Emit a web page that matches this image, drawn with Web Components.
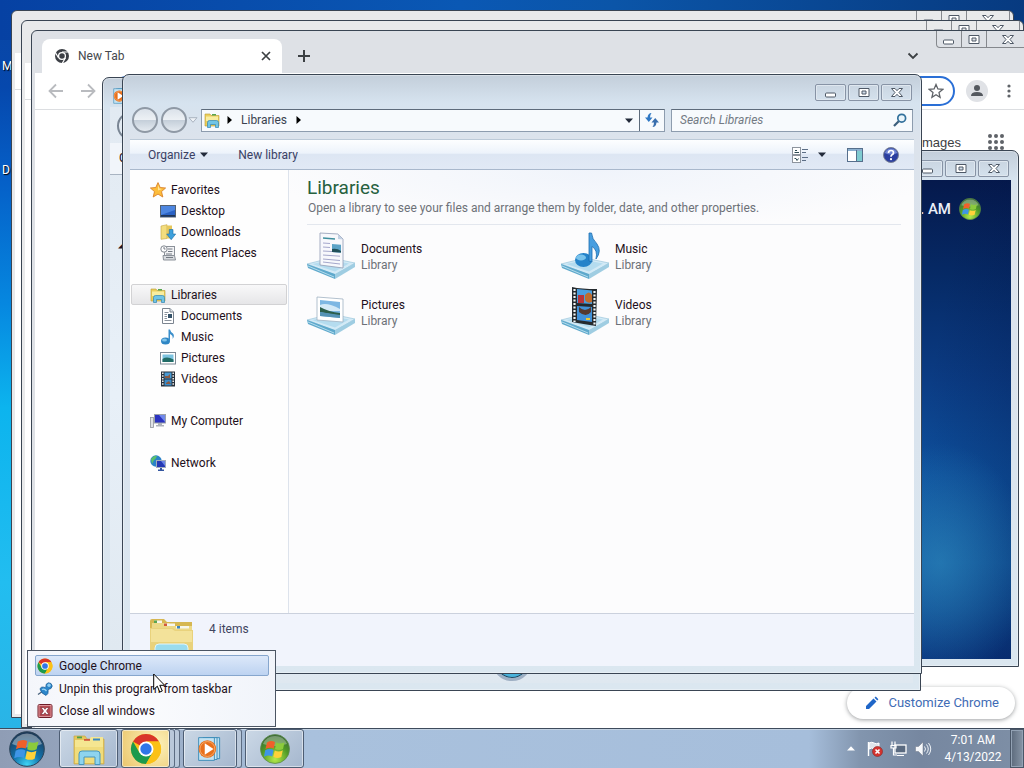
<!DOCTYPE html>
<html lang="en">
<head>
<meta charset="utf-8">
<title>Desktop</title>
<style>
    :root {
        --ui-font: Roboto, "Open Sans", sans-serif;
        --normal-text: 12px;
        --edge: #3a4553;
        --ink: #1e1020;
        --muted: #6d7178;
    }
    html, body { height: 100%; }
    body {
        margin: 0;
        overflow: hidden;
        font-family: var(--ui-font);
        font-size: var(--normal-text);
        line-height: 16px;
        color: var(--ink);
    }
</style>
</head>
<body>
<win-desktop></win-desktop>

<script>
const BASE = `
    <path d="M0 33 L24 27 L48 32 L28 44 Z" fill="#d3eaf6" stroke="#8fbfd6" stroke-width=".6"/>
    <path d="M0 33 L28 43 V48 L1 37 Z" fill="#5fa9cc"/>
    <path d="M28 43 L48 32 V36 L28 48 Z" fill="#9fcde2"/>
    <path d="M5 33 L24 29 L42 32.500 L28 40.500 Z" fill="#b5dcef"/>
    <path d="M1 35 L27 46" stroke="#c9e8f5" stroke-width=".8"/>`;

const FLAG = `
    <path d="M7 8.500 Q11 6 15 8 L13.800 14.500 Q10 12.800 5.500 15 Z" fill="#f0602a"/>
    <path d="M16.300 8.600 Q20 10.500 24.500 8.500 L23 15 Q19 17 15 15 Z" fill="#8ccb3c"/>
    <path d="M5.200 16.300 Q9.500 14 13.500 16 L12.200 22.500 Q8.500 20.500 4 22.700 Z" fill="#3f95e6"/>
    <path d="M14.700 16.600 Q19 18.500 22.800 16.300 L21.300 23 Q17.500 25 13.400 23 Z" fill="#ffd23a"/>`;

// name: [viewBox width, viewBox height, markup]
const ICONS = {
    minimize: [14, 11, `<rect x="1.500" y="6" width="10" height="4" rx="1" fill="#fff" stroke="#4e5866"/>`],
    maximize: [14, 11, `<path d="M2 1.500 h10 v8 h-10 z M5 4 h4 v3 h-4 z" fill="#fff" stroke="#4e5866" fill-rule="evenodd"/>`],
    close: [14, 11, `<path d="M1.500 1.500 H5 L7 3.700 L9 1.500 H12.500 L9 5.500 L12.500 9.500 H9 L7 7.300 L5 9.500 H1.500 L5 5.500 Z" fill="#fff" stroke="#4e5866"/>`],
    chromeMono: [16, 16, `<circle cx="8" cy="8" r="7" fill="#3d4046"/><circle cx="8" cy="8" r="3.400" fill="#3d4046" stroke="#fff" stroke-width="1.300"/>
        <path d="M8 4 H14.500 M4.500 9.800 L1.200 4.200 M11.500 9.800 L8.300 15.200" stroke="#fff" stroke-width="1.200"/>`],
    chrome: [32, 32, `<circle cx="16" cy="16" r="15" fill="#fbc116"/>
        <path d="M16 16 L3 8.500 A15 15 0 0 1 29 8.500 H16 Z" fill="#d9352a"/>
        <path d="M3 8.500 A15 15 0 0 0 16 31 L22.500 19.700 L9.500 19.700 Z" fill="#1c9a4d"/>
        <path d="M16 31 A15 15 0 0 0 29 8.500 H16 L22.500 19.700 Z" fill="#fbc116"/>
        <circle cx="16" cy="16" r="7.500" fill="#fff"/><circle cx="16" cy="16" r="5.700" fill="#2f76e8"/>`],
    tabClose: [12, 12, `<path d="M2 2 L10 10 M10 2 L2 10" stroke="#3c4043" stroke-width="1.700"/>`],
    plus: [14, 14, `<path d="M7 1 V13 M1 7 H13" stroke="#3c4043" stroke-width="2"/>`],
    chevron: [12, 12, `<path d="M1.500 3.500 L6 8 L10.500 3.500" fill="none" stroke="#3c4043" stroke-width="1.800"/>`],
    back: [16, 16, `<path d="M15 8 H2 M8 1.500 L1.500 8 L8 14.500" fill="none" stroke="#b9bbbf" stroke-width="1.800"/>`],
    forward: [16, 16, `<path d="M1 8 H14 M8 1.500 L14.500 8 L8 14.500" fill="none" stroke="#b9bbbf" stroke-width="1.800"/>`],
    star: [16, 16, `<path d="M8 1.500 L9.900 6 L14.700 6.400 L11 9.600 L12.100 14.300 L8 11.800 L3.900 14.300 L5 9.600 L1.300 6.400 L6.100 6 Z" fill="none" stroke="#5f6368" stroke-width="1.300"/>`],
    avatar: [22, 22, `<circle cx="11" cy="11" r="11" fill="#e0e2e6"/><circle cx="11" cy="8" r="3" fill="#54585e"/><path d="M5 16 q0 -4 6 -4 t6 4 z" fill="#54585e"/>`],
    dots: [16, 16, `<g fill="#5f6368"><circle cx="8" cy="3" r="1.600"/><circle cx="8" cy="8" r="1.600"/><circle cx="8" cy="13" r="1.600"/></g>`],
    apps: [16, 16, `<g fill="#5f6368"><circle cx="2" cy="2" r="2"/><circle cx="8" cy="2" r="2"/><circle cx="14" cy="2" r="2"/><circle cx="2" cy="8" r="2"/><circle cx="8" cy="8" r="2"/><circle cx="14" cy="8" r="2"/><circle cx="2" cy="14" r="2"/><circle cx="8" cy="14" r="2"/><circle cx="14" cy="14" r="2"/></g>`],
    pencil: [14, 14, `<path d="M1 13 V10 L8.500 2.500 L11.500 5.500 L4 13 Z M9.500 1.700 L10.800 .6 L13.400 3.200 L12.300 4.500 Z" fill="#1f66c8"/>`],
    down: [8, 5, `<path d="M0 .5 H8 L4 5 Z" fill="#222a3a"/>`],
    right: [5, 8, `<path d="M.5 0 V8 L5 4 Z" fill="#000"/>`],
    hollowDown: [10, 6, `<path d="M1 .7 H9 L5 5.300 Z" fill="#eef2f7" stroke="#aab4c0"/>`],
    up: [8, 5, `<path d="M0 4.500 H8 L4 .3 Z" fill="#fff"/>`],
    folderLib: [16, 16, `<path d="M1 2 h5 l1 1.500 h8 V14 H1 Z" fill="#eccf5c" stroke="#b89a34" stroke-width=".6"/><path d="M2 4.500 h12 V9 H2 Z" fill="#f8eda0"/>
        <rect x="8" y="2" width="4" height="1.500" fill="#58a64c"/><path d="M3.500 15.500 V10.500 Q3.500 8.500 5.500 8.500 H12.500 Q14.500 8.500 14.500 10.500 V15.500 H11.500 V12.500 H6.500 V15.500 Z" fill="#6fc4e6" stroke="#3285b2" stroke-width=".7"/>`],
    explorer: [32, 32, `<path d="M1 3 h11 l2 3 h17 v25 H1 Z" fill="#e5c65c" stroke="#c7a646" stroke-width=".7"/>
        <path d="M2 7 h14 l2 -3 h12 v26 H2 Z" fill="#f5e691"/><path d="M2 14 H30 V30 H2 Z" fill="#f0dc7c"/>
        <rect x="4" y="3.500" width="5" height="1.800" fill="#4e9f4a"/><rect x="11" y="6" width="6" height="1.800" fill="#d3573d"/><rect x="20" y="5.500" width="7" height="2" fill="#3b88c0"/>
        <path d="M6 31.500 V21 Q6 18 9 18 H24 Q27 18 27 21 V31.500 H22 V24 H11 V31.500 Z" fill="#8ed4ee" stroke="#4796bd"/>`],
    folders: [44, 44, `<path d="M1 3 Q1 1 3 1 H15 L18 4 H43 V44 H1 Z" fill="#d6b752"/><path d="M3 5 H20 L23 8 H43 V44 H2 Z" fill="#ecd987"/>
        <rect x="5" y="2.500" width="8" height="2.500" fill="#f6f6ec"/><rect x="5" y="2.500" width="3" height="2.500" fill="#5ba552"/>
        <rect x="15" y="5.500" width="11" height="2.500" fill="#f6f6ec"/><rect x="15" y="5.500" width="3" height="2.500" fill="#d2593d"/>
        <rect x="27" y="8" width="13" height="2.500" fill="#f6f6ec"/><rect x="28" y="8" width="3" height="2.500" fill="#3d83bd"/>
        <path d="M1 10 H24 L27 12 H44 V44 H1 Z" fill="#e9d27c"/><path d="M2 11 H23 L26 13 H43 V24 H2 Z" fill="#f3e29a"/>
        <path d="M6 44 V30 Q6 26 10 26 H35 Q39 26 39 30 V44 Z" fill="#9adcee" stroke="#dff5fb"/><path d="M11 33 H34" stroke="#5aaccb" stroke-width="2"/>`],
    favorites: [16, 16, `<path d="M8 .6 L10.200 5.500 L15.600 6 L11.500 9.600 L12.800 15 L8 12.100 L3.200 15 L4.500 9.600 L.4 6 L5.800 5.500 Z" fill="#fdbd3b" stroke="#d9812a" stroke-width=".9"/><path d="M8 3 L9.300 6.500 L12 7 L8 8.500 Z" fill="#ffe79b"/>`],
    desktop: [16, 16, `<rect x=".5" y="2.500" width="15" height="11.500" fill="#2a62c4" stroke="#54606e"/><path d="M1 3 H15 V7 L1 12 Z" fill="#4d86e0"/><rect x="1" y="12" width="14" height="1.700" fill="#1f3557"/>`],
    downloads: [16, 16, `<path d="M1 2 L7 .7 V14.500 L1 15.300 Z" fill="#f3dd7e" stroke="#c5a544" stroke-width=".6"/><path d="M7 1.500 h5 V14.500 H7 Z" fill="#e6c75b"/><path d="M9.300 5.500 H13 V10 H15.700 L11.200 15.700 L6.700 10 H9.300 Z" fill="#3da0dc" stroke="#1d6ea6" stroke-width=".6"/>`],
    recent: [16, 16, `<rect x="4.500" y="1.500" width="10" height="9" fill="#f3f4f6" stroke="#8b9199"/><path d="M3 10.500 H14.500 L15.500 15 H3.500 Z" fill="#d7dade" stroke="#8b9199"/><circle cx="4" cy="4" r="3.200" fill="#fff" stroke="#80878f"/><path d="M4 2 V4 H5.500 M8 4 H12.500 M8 6.500 H12.500 M6 9 H12 M6 12.500 H13" stroke="#747b84" fill="none"/>`],
    document: [16, 16, `<path d="M2.500 .5 H10 L13.500 4 V15.500 H2.500 Z" fill="#fff" stroke="#7c8590"/><path d="M10 .5 V4 H13.500" fill="#dfe5ea" stroke="#7c8590"/><path d="M4.500 4.500 H8.500 M4.500 6.500 H7 M4.500 8.500 H7 M4.500 10.500 H7 M4.500 12.500 H11.500" stroke="#8a929c"/><rect x="8" y="6" width="4" height="4" fill="#36536a"/>`],
    music: [16, 16, `<ellipse cx="5.500" cy="12" rx="4.500" ry="3.500" fill="#2e86c4"/><ellipse cx="4.500" cy="11" rx="2.500" ry="1.500" fill="#80c4ea"/><path d="M8.500 12 V.5 H10 Q10.500 3 13 4.500 Q15 7 12.500 10 Q13.500 6.500 10 5 V12 Z" fill="#3b8fcb"/>`],
    picture: [16, 16, `<rect x=".5" y="2.500" width="15" height="11.500" fill="#fff" stroke="#7c8995"/><rect x="2.500" y="4.500" width="11" height="7.500" fill="#7cc3e0"/><path d="M2.500 9 Q7 6 13.500 9.500 V12 H2.500 Z" fill="#216c66"/>`],
    video: [16, 16, `<rect x="1" y=".5" width="14" height="15" fill="#27303a"/><rect x="4.500" y="1.500" width="7" height="6" fill="#489ad4"/><rect x="4.500" y="8.500" width="7" height="6" fill="#3b8cc9"/><path d="M5 5 h3 l2 -2 v4 h-5z M6 12 l3 -2 l2 3 h-5z" fill="#8b5a43"/><path d="M2.800 1.500 V15 M13.200 1.500 V15" stroke="#fff" stroke-width="1.400" stroke-dasharray="1.500 1.200"/>`],
    computer: [16, 16, `<rect x=".5" y="4.500" width="3" height="10" fill="#dfe2e6" stroke="#8f959c" stroke-width=".8"/><rect x="4.500" y="1.500" width="11" height="8.500" fill="#2a32c0" stroke="#9ba1aa"/><path d="M9 2 H15 V9 Z" fill="#7189ea"/><path d="M8 10 h4 v2 h2 v1.500 H6 V12 h2 z" fill="#adb2b9"/>`],
    network: [16, 16, `<circle cx="6" cy="6" r="5.700" fill="#2a82c8"/><path d="M1 4 Q4 0 7 1 Q6 4 4 5 L2 9 Z M7 6 q3 0 3 3 l-3 2z" fill="#5bc06a"/><rect x="6.500" y="5.500" width="9" height="7" fill="#2438b4" stroke="#a2acbb"/><path d="M11 6 H15 V11 Z" fill="#6b86e6"/><path d="M10 13 h2 v1.500 h2 V16 H8 V14.500 h2z" fill="#3456a0"/>`],
    refresh: [16, 16, `<path d="M7.500 1 Q4 1 3.500 5.500 H1 L4.800 10 L8.500 5.500 H6 Q6 3 7.500 1 Z" fill="#2f78c4"/><path d="M8.500 15 Q12 15 12.500 10.500 H15 L11.200 6 L7.500 10.500 H10 Q10 13 8.500 15 Z" fill="#3a6fae"/>`],
    search: [14, 14, `<circle cx="8.700" cy="5.200" r="3.900" fill="#eaf5fb" stroke="#33719c" stroke-width="1.700"/><path d="M5.700 8.200 L1 13" stroke="#3a5d7b" stroke-width="2.200"/>`],
    views: [18, 16, `<rect x=".5" y=".5" width="8" height="7" fill="#fff" stroke="#8d949d"/><rect x=".5" y="8.500" width="8" height="7" fill="#fff" stroke="#8d949d"/><path d="M2.500 5.500 h4.500 M3 3.500 h2 M2.500 11.500 h1.500 l1 2 l1.500 -2" stroke="#2d4b53" fill="none"/><path d="M10 2.500 H16 M10 5.500 H14 M10 10.500 H16 M10 13.500 H14" stroke="#5c6e86"/>`],
    preview: [16, 14, `<rect x=".5" y=".5" width="15" height="13" fill="#fff" stroke="#566f8c"/><path d="M1 2 H15" stroke="#8bb0d0" stroke-width="2"/><rect x="10" y="3" width="5" height="10" fill="#7fcbd0"/><path d="M9.500 2 V13" stroke="#566f8c"/>`],
    help: [16, 16, `<circle cx="8" cy="8" r="7.500" fill="#2b3f9f" stroke="#7a8296"/><path d="M1.800 6 A6.500 6.500 0 0 1 14.200 6 Q8 9 1.800 6" fill="#7186d3"/><path d="M5.500 6 Q5.500 3.500 8 3.500 Q10.500 3.500 10.500 5.700 Q10.500 7 8.800 7.900 Q8 8.400 8 9.800" fill="none" stroke="#fff" stroke-width="1.700"/><circle cx="8" cy="12.200" r="1.100" fill="#fff"/>`],
    docLib: [48, 48, BASE + `<path d="M13 2 L31 3 L36 8 V37 L13 34 Z" fill="#f7f8fc" stroke="#8f9bb4" stroke-width=".8"/><path d="M31 3 V8 L36 8.500 Z" fill="#c3d1e3"/><path d="M16 7 L28 8" stroke="#3f8f9e" stroke-width="1.400"/><path d="M16 12 l7 .5 M16 16 l7 .5 M16 20 l17 1 M16 24 l17 1.200 M16 28 l17 1.500 M16 31 l17 2" stroke="#a4a7cb"/><path d="M25 13 l9 .7 v8 l-9 -.7z" fill="#5ba3c7"/><path d="M25 18 q5 -1 9 2 v1.500 l-9 -.5z" fill="#204f58"/>`],
    musicLib: [48, 48, BASE + `<ellipse cx="22.500" cy="29" rx="8.500" ry="7" fill="#2583c9"/><ellipse cx="20" cy="26.500" rx="5" ry="3" fill="#79c3ec"/><path d="M28 30 V2 H30.500 Q31 8 36 13 Q41 20 35 28 Q37 19 31 15.500 V31 Z" fill="#479ee0" stroke="#1c6cae" stroke-width=".8"/>`],
    picLib: [48, 48, BASE + `<path d="M10 10 L36 12 V35 L10 33 Z" fill="#fff" stroke="#9fb1c2" stroke-width=".8"/><path d="M13 13 L33 15 V31 L13 29 Z" fill="#7db7e3"/><path d="M13 18 Q20 15 33 22 V24 H13Z" fill="#d3e9f7"/><path d="M13 20 Q22 25 33 26 V29 L13 25 Z" fill="#2c5f4c"/><path d="M13 25 L33 28 V31 L13 29 Z" fill="#5593b5"/>`],
    videoLib: [48, 48, BASE + `<path d="M11 0 Q20 2 36 2 L35 39 Q22 37 11 35 Z" fill="#252a2e"/><path d="M16 2 L31 3.500 V17 L16 16 Z" fill="#4a9fe0"/><path d="M16 19 L31 20 V35 L16 33 Z" fill="#4191d8"/><path d="M17 8 h6 v8 h-6z" fill="#b9333a"/><path d="M24 8 q4 -5 7 0 v7 q-5 2 -7 -2z" fill="#bf6c2e"/><path d="M18 20 q6 6 12 0 v5 q-5 6 -12 0z" fill="#55392f"/><path d="M25 31 h4 v2 h-4z" fill="#e8ca3c"/><path d="M13.500 2 V35 M33.500 4 V38" stroke="#f2f5f6" stroke-width="2.200" stroke-dasharray="2 1.500"/>`],
    pin: [16, 16, `<path d="M1 13.500 L6 10" stroke="#48627c" stroke-width="1.300"/><path d="M3 8 Q4 5 8 6.500 Q9.500 5.500 9 3.500 Q11 .5 14 2.500 Q16.500 5 14 7.500 Q12 8 11 9 Q12 13 9 14.500 Q4 12.500 3 8 Z" fill="#2c86ca" stroke="#1c5b94" stroke-width=".7"/><circle cx="12" cy="4.300" r="1.700" fill="#8ecdf3"/><path d="M5 8.500 q2.500 -1 4.500 1.500" stroke="#9bd5f4" stroke-width="1.300" fill="none"/>`],
    closeAll: [16, 16, `<rect x="1" y="1.500" width="14" height="13" rx="1.500" fill="#b54a52" stroke="#6d1c28"/><rect x="2" y="2.500" width="12" height="11" fill="none" stroke="#e5a9ac" stroke-width=".8"/><path d="M4 4.500 H6.500 L8 6.300 L9.500 4.500 H12 L9.500 8 L12 11.500 H9.500 L8 9.700 L6.500 11.500 H4 L6.500 8 Z" fill="#fff" stroke="#6d1c28" stroke-width=".6"/>`],
    player: [32, 32, `<path d="M11 3 h16 v24 h-16z" fill="#b9def0" stroke="#3487b5"/><path d="M8 3 h16 v25 h-16z" fill="#c8e6f4" stroke="#3487b5"/><path d="M3 3 h18 v26 h-18z" fill="#c3e2f2" stroke="#3487b5"/><circle cx="13" cy="16" r="10" fill="#e8701c"/><circle cx="13" cy="16" r="8.500" fill="none" stroke="#f7b070"/><path d="M10 9.500 L20 16 L10 22.500 Z" fill="#fff"/>`],
    mediaCenter: [30, 30, `<defs><radialGradient id="g" cx=".5" cy=".85" r=".8"><stop offset="0" stop-color="#b5ea4c"/><stop offset=".6" stop-color="#4f9a26"/><stop offset="1" stop-color="#3c6b35"/></radialGradient></defs><circle cx="15" cy="15" r="14.500" fill="url(#g)" stroke="#5d8a4c" stroke-width=".8"/><path d="M3 10 A13 13 0 0 1 27 10 Q15 14 3 10" fill="#fff" opacity=".3"/>${FLAG}`],
    start: [36, 36, `<defs><radialGradient id="s" cx=".5" cy=".95" r=".9"><stop offset="0" stop-color="#3fd4f5"/><stop offset=".45" stop-color="#1272ab"/><stop offset="1" stop-color="#1c3a59"/></radialGradient></defs><circle cx="18" cy="18" r="17.300" fill="url(#s)" stroke="#2b4257"/><path d="M3 13 A16 16 0 0 1 33 13 Q18 20 3 13" fill="#fff" opacity=".38"/><g transform="translate(.5 .5) scale(1.180)">${FLAG}</g>`],
    flag: [18, 18, `<path d="M2.500 2 V16" stroke="#fff" stroke-width="1.400"/><path d="M3 3 Q6 1.500 8 3 T13 3 V9 Q10 11 8 9 T3 9 Z" fill="#dfe4ea" stroke="#fff"/><circle cx="11.500" cy="11.500" r="5" fill="#d4332f" stroke="#8c2320" stroke-width=".6"/><path d="M9.500 9.500 L13.500 13.500 M13.500 9.500 L9.500 13.500" stroke="#fff" stroke-width="1.600"/>`],
    lan: [18, 18, `<rect x="5" y="5" width="11" height="8" fill="#5a6a80" stroke="#fff" stroke-width="1.300"/><path d="M7 15.500 H14 M2 1.500 V5 M5 1.500 V5 M1 5.500 H6 V8 H1 Z M3.500 8 V15 H7" fill="none" stroke="#fff" stroke-width="1.200"/>`],
    speaker: [18, 18, `<path d="M1.500 6.500 H4.500 L9 2 V16 L4.500 11.500 H1.500 Z" fill="#f5f7fa" stroke="#6e7787" stroke-width=".5"/><path d="M10.500 6.500 q2 2.500 0 5 M12.500 4.500 q3.500 4.500 0 9 M14.500 3 q4.500 6 0 12" fill="none" stroke="#eef2f7"/>`],
    cursor: [13, 20, `<path d="M.7 1 V16.500 L4.300 13.200 L6.800 19 L9.300 18 L6.800 12.300 H11.700 Z" fill="#fff" stroke="#000"/>`]
};

class AppIcon extends HTMLElement {
    constructor() {
        super();
        this.attachShadow({ mode: 'open' });
    }

    connectedCallback() {
        const [w, h, body] = ICONS[this.getAttribute('name')];
        const width = Number(this.getAttribute('size')) || w;
        this.shadowRoot.innerHTML = `
            <style>
                :host { display: block; flex: none; }
                svg { display: block; }
            </style>
            <svg width="${width}" height="${Math.round(width * h / w)}" viewBox="0 0 ${w} ${h}" aria-hidden="true">${body}</svg>
        `;
    }
}
customElements.define('app-icon', AppIcon);

const RESET = `
    button { font: inherit; color: inherit; background: none; border: 0; padding: 0; margin: 0; }
    a { color: inherit; text-decoration: none; }
    input { font: inherit; color: inherit; margin: 0; }
`;

// The joined attribute gives the tabbed strip that hangs from the top edge
class CaptionButtons extends HTMLElement {
    constructor() {
        super();
        this.attachShadow({ mode: 'open' });
        this.shadowRoot.innerHTML = `
            <style>
                ${RESET}
                :host { display: flex; gap: 2px; flex: none; }
                button {
                    display: grid;
                    place-items: center;
                    box-sizing: border-box;
                    width: 31px;
                    height: 17px;
                    border: 1px solid #8793a5;
                    border-radius: 2px;
                    box-shadow: inset 0 0 0 1px #dfe7ef;
                }
                :host([joined]) { gap: 0; border: 1px solid #85888d; border-top: 0; border-radius: 0 0 4px 4px; }
                :host([joined]) button { width: 25px; height: 16px; border: 0; border-right: 1px solid #85888d; border-radius: 0; box-shadow: none; }
                :host([joined]) button:last-child { width: 42px; border-right: 0; }
            </style>
            <button aria-label="Minimize"><app-icon name="minimize"></app-icon></button>
            <button aria-label="Maximize"><app-icon name="maximize"></app-icon></button>
            <button aria-label="Close"><app-icon name="close"></app-icon></button>
        `;
    }
}
customElements.define('caption-buttons', CaptionButtons);

class ChromeWindow extends HTMLElement {
    constructor() {
        super();
        this.attachShadow({ mode: 'open' });
    }

    connectedCallback() {
        const active = this.hasAttribute('active');
        this.shadowRoot.innerHTML = `
            <style>
                ${RESET}
                :host {
                    display: flex;
                    flex-direction: column;
                    box-sizing: border-box;
                    border: 1px solid var(--edge);
                    border-radius: 6px 6px 0 0;
                    background: ${active ? '#dee1e6' : '#e9eaeb'};
                    padding: 0 3px 3px;
                    overflow: hidden;
                }
                .strip { display: flex; align-items: flex-start; height: 42px; padding-left: 7px; flex: none; }
                .tab {
                    display: flex;
                    align-items: center;
                    gap: 8px;
                    box-sizing: border-box;
                    width: 240px;
                    height: 34px;
                    margin-top: 8px;
                    padding: 0 10px 0 12px;
                    border-radius: 8px 8px 0 0;
                    background: #fff;
                    color: #45484d;
                }
                .tab span { flex: 1; }
                .new { margin: 18px 0 0 15px; }
                .list { margin: 19px 17px 0 auto; }
                .page { flex: 1; background: #fff; }
                .bar { display: flex; align-items: center; height: 36px; padding: 0 13px; border-bottom: 1px solid #dcdee1; }
                .bar button + button { margin-left: 16px; }
                .omnibox {
                    display: flex;
                    justify-content: flex-end;
                    align-items: center;
                    box-sizing: border-box;
                    flex: 1;
                    height: 30px;
                    margin: 0 11px 0 16px;
                    padding-right: 9px;
                    border: 2px solid #2a6fd6;
                    border-radius: 15px;
                }
                .bar .menu { margin-left: 13px; }
                .links { display: flex; align-items: center; justify-content: flex-end; gap: 27px; padding: 24px 26px 0 0; font: 13px "Liberation Sans", Arial, sans-serif; color: #3c4043; }
                ::slotted(*) { position: absolute; right: 18px; bottom: 18px; }
            </style>
            <div class="strip">
                ${active ? `
                <div class="tab">
                    <app-icon name="chromeMono"></app-icon>
                    <span>New Tab</span>
                    <button aria-label="Close tab"><app-icon name="tabClose"></app-icon></button>
                </div>
                <button class="new" aria-label="New tab"><app-icon name="plus"></app-icon></button>
                <button class="list" aria-label="Search tabs"><app-icon name="chevron"></app-icon></button>` : '<div class="list"></div>'}
                <caption-buttons joined></caption-buttons>
            </div>
            <div class="page">
                <div class="bar">
                    ${active ? `
                    <button aria-label="Back"><app-icon name="back"></app-icon></button>
                    <button aria-label="Forward"><app-icon name="forward"></app-icon></button>
                    <div class="omnibox"><button aria-label="Bookmark"><app-icon name="star"></app-icon></button></div>
                    <button aria-label="Profile"><app-icon name="avatar"></app-icon></button>
                    <button class="menu" aria-label="Menu"><app-icon name="dots"></app-icon></button>` : ''}
                </div>
                ${active ? `<div class="links"><a href="#images">Images</a><a href="#apps" aria-label="Apps"><app-icon name="apps"></app-icon></a></div>` : ''}
            </div>
            <slot></slot>
        `;
    }
}
customElements.define('chrome-window', ChromeWindow);

class CustomizeButton extends HTMLElement {
    constructor() {
        super();
        this.attachShadow({ mode: 'open' });
        this.shadowRoot.innerHTML = `
            <style>
                ${RESET}
                button {
                    display: flex;
                    align-items: center;
                    gap: 9px;
                    height: 32px;
                    padding: 0 16px 0 18px;
                    border-radius: 16px;
                    background: #fff;
                    box-shadow: 0 1px 4px rgba(60, 64, 67, .5);
                    color: #3f6cb5;
                    font-size: 13px;
                }
            </style>
            <button><app-icon name="pencil"></app-icon><slot></slot></button>
        `;
    }
}
customElements.define('customize-button', CustomizeButton);

class AeroWindow extends HTMLElement {
    constructor() {
        super();
        this.attachShadow({ mode: 'open' });
        this.shadowRoot.innerHTML = `
            <style>
                :host {
                    display: flex;
                    flex-direction: column;
                    box-sizing: border-box;
                    padding: 0 7px 7px;
                    border: 1px solid var(--edge);
                    border-radius: 7px 7px 0 0;
                    background: linear-gradient(#c3ceda, #d6e3ef 28px, #dce3ec 64px, #dae4ee 60%, #dbe7f0);
                    box-shadow: inset 0 0 0 1px rgba(255, 255, 255, .35);
                    overflow: hidden;
                }
                .title { display: flex; align-items: flex-start; justify-content: space-between; height: 29px; padding: 9px 2px 0; box-sizing: border-box; flex: none; }
                caption-buttons { margin-left: auto; }
                .client { display: flex; flex-direction: column; flex: 1; min-height: 0; }
            </style>
            <div class="title"><slot name="icon"></slot><caption-buttons></caption-buttons></div>
            <div class="client"><slot></slot></div>
        `;
    }
}
customElements.define('aero-window', AeroWindow);

class MediaPlayer extends HTMLElement {
    constructor() {
        super();
        this.attachShadow({ mode: 'open' });
        this.shadowRoot.innerHTML = `
            <style>
                ${RESET}
                :host { display: flex; flex-direction: column; flex: 1; background: linear-gradient(#e2eaf2, #e8f0f8 50%, #dfe8f0); }
                .nav { height: 36px; padding: 5px 7px; box-sizing: border-box; }
                .nav button { width: 28px; height: 28px; border-radius: 50%; border: 2px solid #7a8694; }
                .menu { height: 31px; line-height: 31px; padding-left: 9px; background: #f1f5fa; border-bottom: 1px solid #a9b4c2; }
                .tree { flex: 1; padding: 60px 8px 0; line-height: 16px; }
                .controls { display: flex; justify-content: center; height: 50px; }
                .controls button { width: 40px; height: 40px; margin-top: 8px; border-radius: 50%; border: 3px solid #9fb0c4; background: #49b3dc; box-shadow: inset 0 0 0 1px #24465e; }
            </style>
            <div class="nav"><button aria-label="Back"></button></div>
            <div class="menu">C</div>
            <div class="tree">◢</div>
            <div class="controls"><button aria-label="Play"></button></div>
        `;
    }
}
customElements.define('media-player', MediaPlayer);

class MediaCenter extends HTMLElement {
    constructor() {
        super();
        this.attachShadow({ mode: 'open' });
        this.shadowRoot.innerHTML = `
            <style>
                :host {
                    display: block;
                    flex: 1;
                    background:
                        radial-gradient(ellipse 90px 120px at 91% 80%, rgba(48, 140, 190, .6), transparent),
                        linear-gradient(100deg, transparent 85%, rgba(3, 20, 70, .35)),
                        linear-gradient(#05194c, #062a66 20%, #0b3c84 42%, #0e529f 62%, #115ba6 80%, #0e4c97 90%, #0a3884);
                }
                .clock { display: flex; justify-content: flex-end; align-items: center; gap: 8px; padding: 18px 30px 0 0; color: #e9eef8; font: 500 15px/22px Roboto, sans-serif; }
            </style>
            <div class="clock"><span>. AM</span><app-icon name="mediaCenter" size="22"></app-icon></div>
        `;
    }
}
customElements.define('media-center', MediaCenter);

class NavItem extends HTMLElement {
    constructor() {
        super();
        this.attachShadow({ mode: 'open' });
    }

    connectedCallback() {
        this.shadowRoot.innerHTML = `
            <style>
                ${RESET}
                :host { display: block; }
                :host([top]:not(:first-child)) { margin-top: 21px; }
                a {
                    display: flex;
                    align-items: center;
                    gap: 5px;
                    box-sizing: border-box;
                    height: 21px;
                    padding-left: 28px;
                    border: 1px solid transparent;
                    border-radius: 2px;
                    white-space: nowrap;
                }
                :host([top]) a { padding-left: 18px; }
                :host([selected]) a { border-color: #d2d2d4; background: linear-gradient(#f8f8f9, #e6e6e8); }
            </style>
            <a href="#"><app-icon name="${this.getAttribute('icon')}"></app-icon><slot></slot></a>
        `;
    }
}
customElements.define('nav-item', NavItem);

class LibraryItem extends HTMLElement {
    constructor() {
        super();
        this.attachShadow({ mode: 'open' });
    }

    connectedCallback() {
        this.shadowRoot.innerHTML = `
            <style>
                ${RESET}
                :host { display: block; }
                a { display: flex; align-items: center; gap: 6px; height: 48px; }
                span { padding-top: 4px; }
                small { display: block; font-size: var(--normal-text); color: var(--muted); }
            </style>
            <a href="#"><app-icon name="${this.getAttribute('icon')}"></app-icon><span><slot></slot><small>Library</small></span></a>
        `;
    }
}
customElements.define('library-item', LibraryItem);

class FileExplorer extends HTMLElement {
    constructor() {
        super();
        this.attachShadow({ mode: 'open' });
        this.shadowRoot.innerHTML = `
            <style>
                ${RESET}
                :host { display: flex; flex-direction: column; flex: 1; min-height: 0; }
                .nav { display: flex; align-items: center; height: 32px; padding: 0 1px 0 2px; flex: none; }
                .round {
                    width: 26px;
                    height: 26px;
                    margin-right: 3px;
                    border: 2px solid #8f99a5;
                    border-radius: 50%;
                    background: linear-gradient(#dbe2ea, #edf1f5 50%, #c5cfda 52%, #e4eaf0);
                }
                .round + .round { margin-right: 1px; }
                .address, .search { display: flex; align-items: center; box-sizing: border-box; height: 23px; border: 1px solid #8d9cae; border-top-color: #5d6b7b; background: #f7fafd; }
                .address { flex: 1; margin-left: 3px; padding-left: 2px; }
                .crumbs { display: flex; align-items: center; gap: 9px; flex: 1; padding-left: 7px; color: #3c4350; }
                .drop { padding: 0 6px; }
                .go { display: grid; place-items: center; width: 25px; height: 21px; border-left: 1px solid #5d6b7b; }
                .search { width: 242px; margin-left: 6px; padding-right: 5px; }
                .search input { flex: 1; min-width: 0; border: 0; outline: 0; padding: 0 0 0 8px; background: none; font-style: italic; }
                .search input::placeholder { color: #737a84; opacity: 1; }
                .commands {
                    display: flex;
                    align-items: center;
                    height: 31px;
                    box-sizing: border-box;
                    margin-top: 3px;
                    padding: 0 15px 0 18px;
                    border-top: 1px solid #bccad8;
                    border-bottom: 1px solid #a9b8cc;
                    background: linear-gradient(#fdfeff, #edf3fb 45%, #dde6f3 50%, #e1e9f5);
                    color: #3a4164;
                    flex: none;
                }
                .commands button { display: flex; align-items: center; gap: 5px; }
                .commands .new { margin-left: 30px; }
                .commands .views { margin-left: auto; gap: 8px; }
                .commands .preview { margin: 0 20px 0 21px; }
                .body { display: flex; flex: 1; min-height: 0; background: #fcfcfd; }
                aside { box-sizing: border-box; width: 159px; padding: 9px 1px 0; border-right: 1px solid #dde3ec; background: #fefefe; }
                main { flex: 1; padding: 6px 13px 0 18px; background: radial-gradient(ellipse 340px 60px at 50% 0, #f0f4fb, transparent); }
                h1 { margin: 0; font-size: 19px; line-height: 24px; font-weight: normal; color: #27613f; }
                p { margin: 0; padding: 0 0 8px 1px; color: var(--muted); border-bottom: 1px solid #e3e7ee; }
                .grid { display: grid; grid-template-columns: 254px 254px; row-gap: 8px; padding-top: 6px; }
                footer { display: flex; align-items: flex-start; gap: 16px; box-sizing: border-box; height: 53px; padding: 4px 0 0 19px; border-top: 1px solid #cbd1dd; background: #f1f4fc; color: #3f4560; overflow: hidden; flex: none; }
                footer span { padding-top: 3px; }
            </style>
            <div class="nav">
                <button class="round" aria-label="Back"></button>
                <button class="round" aria-label="Forward"></button>
                <button aria-label="Recent pages"><app-icon name="hollowDown"></app-icon></button>
                <div class="address">
                    <app-icon name="folderLib"></app-icon>
                    <div class="crumbs"><app-icon name="right"></app-icon><button>Libraries</button><app-icon name="right"></app-icon></div>
                    <button class="drop" aria-label="Previous locations"><app-icon name="down"></app-icon></button>
                    <button class="go" aria-label="Refresh"><app-icon name="refresh"></app-icon></button>
                </div>
                <label class="search"><input type="text" placeholder="Search Libraries" aria-label="Search Libraries"><app-icon name="search"></app-icon></label>
            </div>
            <div class="commands">
                <button>Organize <app-icon name="down"></app-icon></button>
                <button class="new">New library</button>
                <button class="views" aria-label="Change your view"><app-icon name="views"></app-icon><app-icon name="down"></app-icon></button>
                <button class="preview" aria-label="Show the preview pane"><app-icon name="preview"></app-icon></button>
                <button aria-label="Get help"><app-icon name="help"></app-icon></button>
            </div>
            <div class="body">
                <aside>
                    <nav-item top icon="favorites">Favorites</nav-item>
                    <nav-item icon="desktop">Desktop</nav-item>
                    <nav-item icon="downloads">Downloads</nav-item>
                    <nav-item icon="recent">Recent Places</nav-item>
                    <nav-item top selected icon="folderLib">Libraries</nav-item>
                    <nav-item icon="document">Documents</nav-item>
                    <nav-item icon="music">Music</nav-item>
                    <nav-item icon="picture">Pictures</nav-item>
                    <nav-item icon="video">Videos</nav-item>
                    <nav-item top icon="computer">My Computer</nav-item>
                    <nav-item top icon="network">Network</nav-item>
                </aside>
                <main>
                    <h1>Libraries</h1>
                    <p>Open a library to see your files and arrange them by folder, date, and other properties.</p>
                    <div class="grid">
                        <library-item icon="docLib">Documents</library-item>
                        <library-item icon="musicLib">Music</library-item>
                        <library-item icon="picLib">Pictures</library-item>
                        <library-item icon="videoLib">Videos</library-item>
                    </div>
                </main>
            </div>
            <footer><app-icon name="folders"></app-icon><span>4 items</span></footer>
        `;
    }
}
customElements.define('file-explorer', FileExplorer);

class JumpList extends HTMLElement {
    constructor() {
        super();
        this.attachShadow({ mode: 'open' });
        this.shadowRoot.innerHTML = `
            <style>
                ${RESET}
                :host { display: flex; flex-direction: column; box-sizing: border-box; padding: 4px 6px 4px 7px; border: 1px solid #4b5563; background: linear-gradient(90deg, #f4f6fb, #fbfcfe 40%, #f1f4fa); }
                button { display: flex; align-items: center; gap: 6px; box-sizing: border-box; height: 22px; padding-left: 1px; border: 1px solid transparent; border-radius: 2px; white-space: nowrap; }
                button:first-of-type { height: 21px; margin-bottom: 2px; border-color: #86a6cd; background: linear-gradient(#dce8f9, #bdd3f1); }
            </style>
            <button><app-icon name="chrome" size="16"></app-icon>Google Chrome</button>
            <button><app-icon name="pin"></app-icon>Unpin this program from taskbar</button>
            <button><app-icon name="closeAll"></app-icon>Close all windows</button>
        `;
    }
}
customElements.define('jump-list', JumpList);

class TaskButton extends HTMLElement {
    constructor() {
        super();
        this.attachShadow({ mode: 'open' });
    }

    connectedCallback() {
        this.shadowRoot.innerHTML = `
            <style>
                ${RESET}
                :host { display: flex; width: 59px; height: 39px; }
                button {
                    display: grid;
                    place-items: center;
                    flex: 1;
                    box-sizing: border-box;
                    border: 1px solid #4d5d73;
                    border-radius: 3px;
                    background: linear-gradient(135deg, #cbd8e6, #a5b7ce);
                    box-shadow: inset 0 0 0 1px rgba(255, 255, 255, .5);
                }
                :host([hot]) button { background: radial-gradient(circle at 70% 40%, #fdf3bd, #ecca74 90%); }
                i { width: 4px; border: 1px solid #5c6c82; border-left: 0; border-radius: 0 3px 3px 0; background: #b9c8da; }
            </style>
            <button aria-label="${this.getAttribute('label')}"><app-icon name="${this.getAttribute('icon')}" size="${this.getAttribute('size') || 32}"></app-icon></button>
            ${'<i></i>'.repeat(Number(this.getAttribute('stack')) || 0)}
        `;
    }
}
customElements.define('task-button', TaskButton);

class TaskBar extends HTMLElement {
    constructor() {
        super();
        this.attachShadow({ mode: 'open' });
        this.shadowRoot.innerHTML = `
            <style>
                ${RESET}
                :host {
                    display: flex;
                    align-items: center;
                    box-sizing: border-box;
                    height: 40px;
                    border-top: 1px solid #3e4b5c;
                    background: linear-gradient(90deg, #8f9db5, #98a9c2 12%, #a9c1dd 30%, #a6bedb 79%, #8295ae 84%, #7687a0 90%, #7e8fa6);
                    box-shadow: inset 0 1px 0 #c4d3e3;
                    color: #fff;
                }
                .start { margin: 0 14px 0 9px; }
                .tasks { display: flex; gap: 3px; flex: 1; }
                .tray { display: flex; align-items: center; gap: 6px; }
                .tray app-icon:first-child { margin-right: 5px; }
                time { width: 60px; margin: 0 7px 0 5px; text-align: center; line-height: 17px; }
                .peek { align-self: stretch; width: 14px; border: 1px solid #4a5768; background: linear-gradient(90deg, #5c6a7c, #8795a6); box-shadow: inset 0 0 0 1px #93a2b4; }
            </style>
            <button class="start" aria-label="Start"><app-icon name="start"></app-icon></button>
            <div class="tasks">
                <task-button icon="explorer" label="Explorer"></task-button>
                <task-button icon="chrome" label="Google Chrome" stack="2" hot></task-button>
                <task-button icon="player" size="28" label="Media Player" stack="1"></task-button>
                <task-button icon="mediaCenter" size="30" label="Media Center"></task-button>
            </div>
            <div class="tray">
                <app-icon name="up"></app-icon>
                <app-icon name="flag"></app-icon>
                <app-icon name="lan"></app-icon>
                <app-icon name="speaker"></app-icon>
                <time>7:01 AM<br>4/13/2022</time>
            </div>
            <button class="peek" aria-label="Show desktop"></button>
        `;
    }
}
customElements.define('task-bar', TaskBar);

class WinDesktop extends HTMLElement {
    constructor() {
        super();
        this.attachShadow({ mode: 'open' });
        this.shadowRoot.innerHTML = `
            <style>
                :host { display: flex; flex-direction: column; height: 100vh; }
                .space {
                    position: relative;
                    flex: 1;
                    overflow: hidden;
                    background: linear-gradient(#0a45a2, #0648ad 12%, #0560c8 25%, #0688e0 42%, #0cb4ee 56%, #22bdf0 80%, #2ab4e6);
                }
                .sky { position: absolute; inset: 0 0 auto; height: 40px; background: linear-gradient(90deg, #0641a3, #0a58b4 45%, #0b55a8 60%, #073a80); }
                .space > :not(.sky) { position: absolute; }
                .label { left: 2px; color: #fff; text-shadow: 1px 1px 1px #000; }
                .label.one { top: 58px; }
                .label.two { top: 162px; }
                chrome-window { width: 1003px; height: 708px; }
                .c1 { left: 11px; top: 10px; }
                .c2 { left: 21px; top: 20px; }
                .c3 { left: 31px; top: 30px; }
                .center { left: 219px; top: 150px; width: 800px; height: 517px; }
                .player { left: 102px; top: 77px; width: 819px; height: 614px; }
                .explorer { left: 122px; top: 74px; width: 800px; height: 600px; }
                jump-list { left: 27px; bottom: 1px; width: 249px; height: 77px; }
                .pointer { left: 153px; top: 673px; }
            </style>
            <div class="space">
                <div class="sky"></div>
                <span class="label one">M</span>
                <span class="label two">D</span>
                <chrome-window class="c1"></chrome-window>
                <chrome-window class="c2"></chrome-window>
                <chrome-window class="c3" active><customize-button>Customize Chrome</customize-button></chrome-window>
                <aero-window class="center"><media-center></media-center></aero-window>
                <aero-window class="player"><app-icon slot="icon" name="player" size="18"></app-icon><media-player></media-player></aero-window>
                <aero-window class="explorer"><file-explorer></file-explorer></aero-window>
                <jump-list></jump-list>
                <app-icon class="pointer" name="cursor"></app-icon>
            </div>
            <task-bar></task-bar>
        `;
    }
}
customElements.define('win-desktop', WinDesktop);
</script>
</body>
</html>
